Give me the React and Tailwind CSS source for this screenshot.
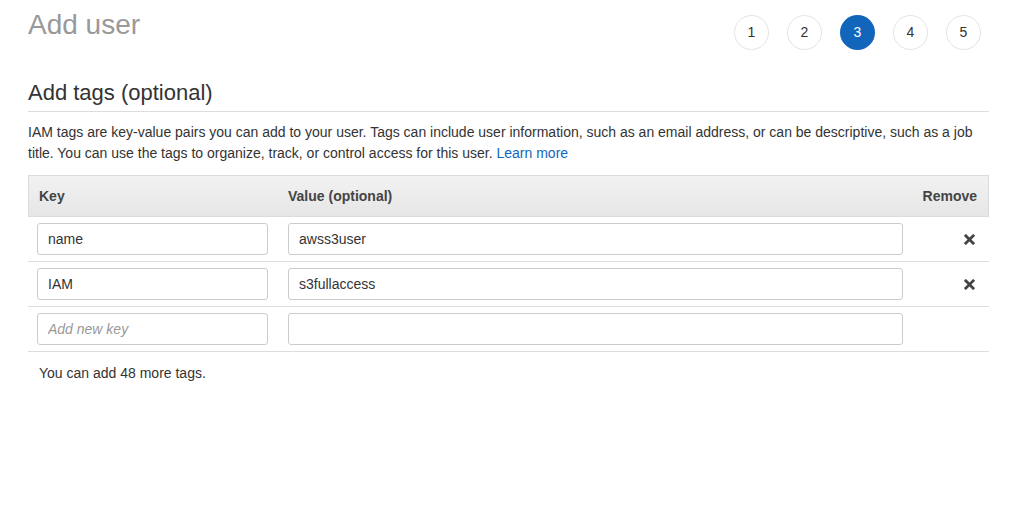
export default function App() {
  const steps = [1, 2, 3, 4, 5];
  const rows = [
    { key: "name", value: "awss3user" },
    { key: "IAM", value: "s3fullaccess" },
  ];

  return (
    <div className="min-h-screen bg-white pt-[1px] font-['Liberation_Sans',Arial,sans-serif] text-[#333]">
      <div className="pl-[28px] pr-[35px]">
        <div className="flex items-start justify-between">
          <h1 className="pt-[7px] text-[28px] leading-[34px] text-[#999]">Add user</h1>
          <div className="mt-[14px] mr-[8px] flex gap-[18px]">
            {steps.map((s) => (
              <div
                key={s}
                className={`flex h-[35px] w-[35px] items-center justify-center rounded-full text-[14px] ${
                  s === 3
                    ? "bg-[#1166bb] text-white"
                    : "border border-[#e4e4e4] bg-white text-[#333]"
                }`}
              >
                {s}
              </div>
            ))}
          </div>
        </div>

        <h2 className="mt-[30px] border-b border-[#dddddd] pb-[5px] text-[22px] leading-[26px] text-[#333]">
          Add tags (optional)
        </h2>

        <p className="mt-[10px] text-[14px] leading-[21px] text-[#333]">
          IAM tags are key-value pairs you can add to your user. Tags can include user information, such as an email address, or can be descriptive, such as a job
          title. You can use the tags to organize, track, or control access for this user.{" "}
          <a href="#" className="text-[#1166bb]">
            Learn more
          </a>
        </p>

        <div className="mt-[11px]">
          <div className="flex h-[42px] items-center border border-[#dcdcdc] bg-gradient-to-b from-[#f2f2f2] to-[#e6e6e6] text-[14px] font-bold text-[#444]">
            <div className="w-[249px] pl-[10px]">Key</div>
            <div className="flex-1 pl-[10px]">Value (optional)</div>
            <div className="pr-[11px]">Remove</div>
          </div>

          {rows.map((r) => (
            <div key={r.key} className="flex h-[45px] items-center border-b border-[#dddddd]">
              <div className="w-[249px] pl-[9px]">
                <input
                  readOnly
                  value={r.key}
                  className="h-[32px] w-[231px] rounded-[3px] border border-[#cccccc] px-[10px] text-[14px] text-[#333] outline-none"
                />
              </div>
              <div className="pl-[11px]">
                <input
                  readOnly
                  value={r.value}
                  className="h-[32px] w-[615px] rounded-[3px] border border-[#cccccc] px-[10px] text-[14px] text-[#333] outline-none"
                />
              </div>
              <div className="flex flex-1 justify-end pr-[14px]">
                <svg width="11" height="11" viewBox="0 0 12 12">
                  <path d="M2 2 L10 10 M10 2 L2 10" stroke="#444" strokeWidth="3" strokeLinecap="square" />
                </svg>
              </div>
            </div>
          ))}

          <div className="flex h-[45px] items-center border-b border-[#dddddd]">
            <div className="w-[249px] pl-[9px]">
              <input
                readOnly
                placeholder="Add new key"
                className="h-[32px] w-[231px] rounded-[3px] border border-[#cccccc] px-[10px] text-[14px] italic text-[#333] outline-none placeholder:text-[#999]"
              />
            </div>
            <div className="pl-[11px]">
              <input
                readOnly
                className="h-[32px] w-[615px] rounded-[3px] border border-[#cccccc] px-[10px] text-[14px] text-[#333] outline-none"
              />
            </div>
          </div>
        </div>

        <p className="mt-[13px] pl-[11px] text-[14px] leading-[16px] text-[#333]">You can add 48 more tags.</p>
      </div>
    </div>
  );
}
